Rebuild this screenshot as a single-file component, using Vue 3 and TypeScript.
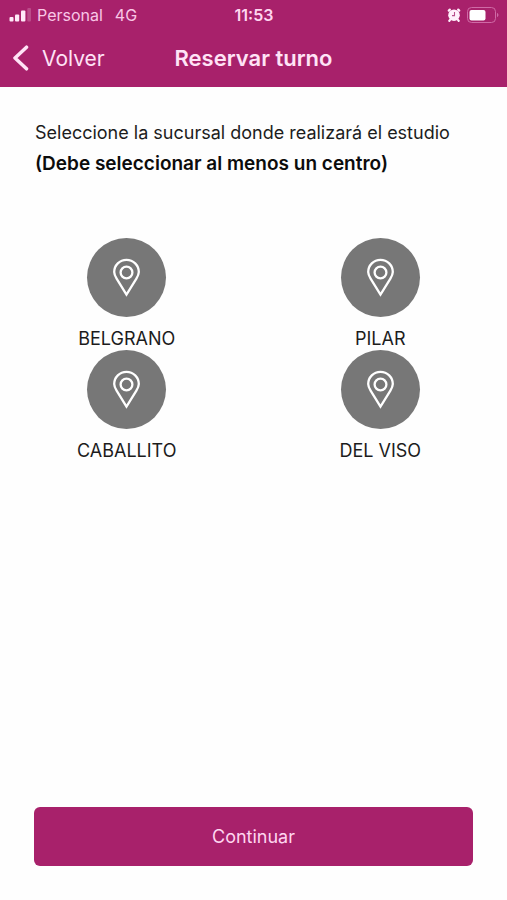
<script setup lang="ts">
import { ref } from 'vue'

const branches: string[] = ['BELGRANO', 'PILAR', 'CABALLITO', 'DEL VISO']
const selected = ref<string[]>([])

function toggle(name: string): void {
  selected.value = selected.value.includes(name)
    ? selected.value.filter((item) => item !== name)
    : [...selected.value, name]
}
</script>

<template>
  <div class="screen">
    <header class="header">
      <div class="status">
        <div class="status-left">
          <svg class="signal" width="22" height="14" viewBox="0 0 22 14" aria-hidden="true">
            <rect x="0.5" y="9" width="4" height="4.5" rx="1" />
            <rect x="6" y="6.5" width="4.2" height="7" rx="1" />
            <rect x="12" y="2.5" width="4.4" height="11" rx="1" />
            <rect x="18.3" y="0" width="3.7" height="13.5" rx="1" opacity="0.22" />
          </svg>
          <span class="carrier">Personal</span>
          <span>4G</span>
        </div>
        <time class="clock">11:53</time>
        <div class="status-right">
          <svg width="14" height="14" viewBox="0 0 14 14" aria-hidden="true">
            <circle cx="7" cy="7.2" r="5.8" fill="#fff0fb" />
            <path d="M1.8 2.6 2.8 1.6M11.2 1.6 12.2 2.6M3 11.8l-.7 1M11 11.8l.7 1" stroke="#fff0fb" stroke-width="2.2" stroke-linecap="round" />
            <path d="M7.5 4v3.6H5" fill="none" stroke="#b8508c" stroke-width="1.1" />
          </svg>
          <svg width="32" height="16" viewBox="0 0 32 16" aria-hidden="true">
            <rect x="0.5" y="0.5" width="28" height="15" rx="4" fill="none" stroke="#cf6aa6" />
            <rect x="2.5" y="3" width="16" height="10.5" rx="2" fill="#fff" />
            <path d="M30.5 6.5q1 1.5 0 3z" fill="#cf6aa6" stroke="#cf6aa6" />
          </svg>
        </div>
      </div>
      <nav class="nav">
        <a class="back" href="#">
          <svg width="17" height="26" viewBox="0 0 17 26" aria-hidden="true">
            <path d="M14.5 2.2 3 13 14.5 23.8" fill="none" stroke="currentColor" stroke-width="3.5" stroke-linecap="round" stroke-linejoin="round" />
          </svg>
          <span>Volver</span>
        </a>
        <h1 class="title">Reservar turno</h1>
      </nav>
    </header>

    <main class="main">
      <div class="intro">
        <p>Seleccione la sucursal donde realizará el estudio</p>
        <p class="strong">(Debe seleccionar al menos un centro)</p>
      </div>
      <div class="branches">
        <button
          v-for="name in branches"
          :key="name"
          type="button"
          class="branch"
          :class="{ active: selected.includes(name) }"
          :aria-pressed="selected.includes(name)"
          @click="toggle(name)"
        >
          <span class="disc">
            <svg width="27" height="39" viewBox="0 0 27 39" fill="none" stroke="#fff" stroke-width="2.3" aria-hidden="true">
              <path d="M13.5 36.6 3.6 20.6C2 18 1.2 16.3 1.2 14.1a12.3 12.3 0 0 1 24.6 0C25.8 16.3 25 18 23.4 20.6Z" stroke-linejoin="miter" />
              <circle cx="13.5" cy="14.5" r="5.9" />
            </svg>
          </span>
          <span class="branch-name">{{ name }}</span>
        </button>
      </div>
    </main>

    <footer class="footer">
      <button type="button" class="continue">Continuar</button>
    </footer>
  </div>
</template>

<style>
body {
  margin: 0;
  background: #fefefe;
}
</style>

<style scoped>
.screen {
  display: flex;
  flex-direction: column;
  min-height: 100vh;
  font-family: Inter, 'Liberation Sans', sans-serif;
  color: #1c1c1c;
}

.header {
  background: #a8216b;
  color: #ffe3f6;
}

.status {
  display: grid;
  grid-template-columns: 1fr auto 1fr;
  align-items: center;
  height: 29px;
  padding: 0 8px 0 9px;
  font-size: 16px;
  color: #f9c6e6;
}

.status-left,
.status-right {
  display: flex;
  align-items: center;
}

.signal {
  margin-right: 6px;
  fill: #ffe9f8;
}

.carrier {
  margin-right: 12px;
}

.clock {
  font-weight: 600;
  color: #ffd6f0;
}

.status-right {
  justify-content: flex-end;
  gap: 6px;
}

.nav {
  display: grid;
  grid-template-columns: 1fr auto 1fr;
  align-items: center;
  height: 58px;
  padding: 0 12px;
}

.back {
  display: flex;
  align-items: center;
  gap: 13px;
  font-size: 21px;
  color: inherit;
  text-decoration: none;
}

.title {
  margin: 0;
  font-size: 22px;
  font-weight: 600;
}

.main {
  flex: 1;
}

.intro {
  padding: 30px 35px 59px;
  font-size: 18px;
  line-height: 31px;
}

.intro p {
  margin: 0;
}

.intro .strong {
  font-size: 19px;
  font-weight: 600;
  color: #0c0c0c;
}

.branches {
  display: grid;
  grid-template-columns: 1fr 1fr;
}

.branch {
  display: flex;
  flex-direction: column;
  align-items: center;
  gap: 11px;
  padding: 0;
  border: 0;
  background: none;
  font: inherit;
  font-size: 18px;
  line-height: 22px;
  color: inherit;
  cursor: pointer;
}

.disc {
  display: grid;
  place-items: center;
  width: 79px;
  height: 79px;
  border-radius: 50%;
  background: #777;
}

.active .disc {
  background: #a8216b;
}

.footer {
  padding: 0 34px 34px;
}

.continue {
  display: block;
  width: 100%;
  height: 59px;
  border: 0;
  border-radius: 6px;
  background: #a8216b;
  font: inherit;
  font-size: 18px;
  color: #ffd6f0;
  cursor: pointer;
}
</style>
